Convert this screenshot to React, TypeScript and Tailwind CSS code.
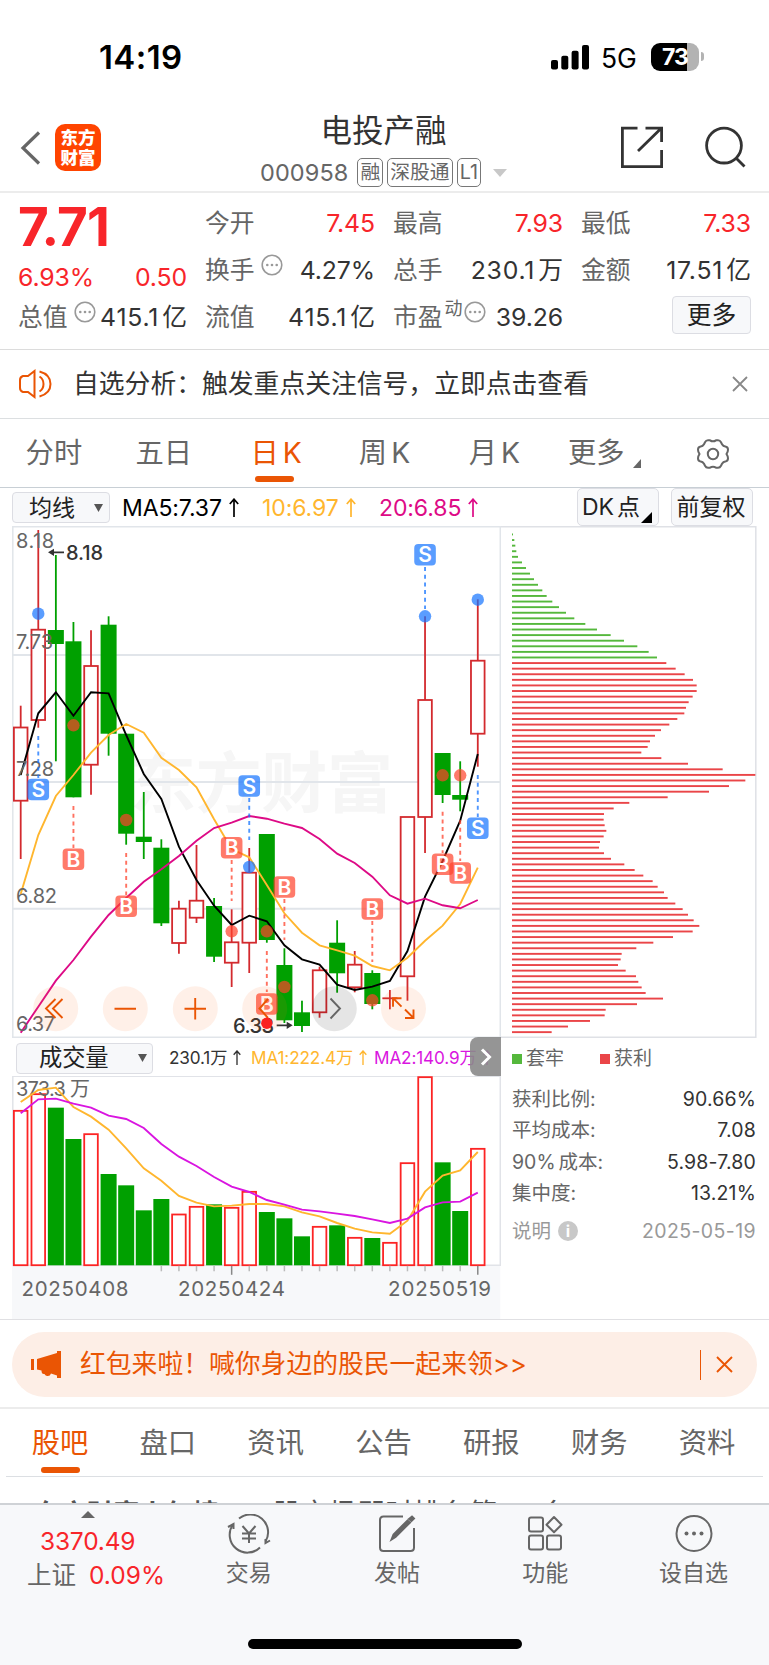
import type { ReactNode } from "react";

const STEP = 17.58;
const cx = (i: number) => 20.7 + STEP * i;

type Candle = [up: 0 | 1, high: number, top: number, bottom: number, low: number];

const candles: Candle[] = [
  [1, 705.7, 727.5, 800.7, 859],
  [1, 530, 629.7, 720, 727.7],
  [0, 555, 630, 644, 761.3],
  [0, 622, 641.3, 797.3, 797.3],
  [1, 630.3, 666, 764.7, 794.7],
  [0, 616.3, 624.7, 733.7, 755.7],
  [0, 733.7, 733.7, 833.7, 844.7],
  [0, 792, 836.7, 842, 859],
  [0, 839.3, 847.7, 923.3, 926],
  [1, 900.7, 908.7, 943, 953.7],
  [1, 845, 900.7, 917.7, 923],
  [0, 898, 906, 956.7, 962],
  [1, 909.3, 942.3, 962.7, 987],
  [1, 848, 872.7, 942.7, 973],
  [0, 834, 834, 940, 942.7],
  [0, 948.3, 965, 1020.3, 1023],
  [0, 1000.7, 1012.3, 1026, 1032],
  [1, 966.7, 970.3, 1012.3, 1017.7],
  [0, 920.3, 942.7, 973.3, 992.7],
  [1, 951, 964.7, 987.3, 992.3],
  [0, 970.3, 973, 1004, 1009.3],
  [1, 990, 998.3, 998.3, 1009.3],
  [1, 817, 817, 976.3, 1000.7],
  [1, 616.3, 700, 817, 853],
  [0, 753, 753, 795, 803],
  [0, 761.3, 795, 799.7, 811.3],
  [1, 599.3, 660.7, 733.7, 766.7],
];

const ma5 = [775, 713.3, 692.3, 715.7, 692.3, 693.3, 735, 774, 799, 846.7, 880, 905.7, 925, 915.7, 921.3, 945.3, 959.3, 964.7, 984.7, 990, 986.7, 981, 951, 896.7, 861, 820.7, 754];
const ma10 = [894, 835, 796, 775, 752.7, 735, 724, 732.7, 757.7, 770, 787.3, 819.3, 849, 857.3, 885, 913.3, 932.7, 945.3, 950.3, 955.7, 966, 970.3, 957.7, 940.7, 925.7, 904, 867.7];
const ma20 = [1032.7, 1006.7, 980.7, 960, 936.7, 915, 898, 881.7, 869.3, 856, 840.7, 828, 822.7, 816, 818.7, 823.7, 828, 839, 853.7, 863, 876.7, 895.3, 903.7, 898.7, 905.3, 908.3, 900];

// offsets from the top of the volume pane, in thirds of a pixel
const volTops = [241, 191, 233, 327, 311, 432, 466, 541, 507, 552, 529, 523, 532, 484, 546, 565, 619, 589, 586, 622, 624, 637, 398, 140, 397, 543, 355];
const volMa1 = [216, 180, 173, 231, 260, 299, 355, 415, 452, 498, 518, 529, 527, 522, 522, 529, 547, 559, 579, 596, 607, 611, 572, 485, 437, 421, 366];
const volMa2 = [250, 208, 206, 221, 233, 257, 267, 294, 342, 380, 408, 441, 470, 486, 510, 524, 539, 544, 551, 558, 568, 579, 566, 532, 517, 515, 488];
const vy = (v: number) => 1030 + v / 3;

const chips = [
  39, 43, 46, 49, 54, 66, 78, 90, 102, 114, 127, 140, 157, 177, 198, 223, 256, 291, 332, 372, 412, 446, 471,
  499, 527, 554, 579, 590, 590, 578, 566, 558, 553, 532, 508, 483, 465, 450, 443, 424, 484, 564, 668,
  766, 736, 687, 627, 503, 388, 341, 312, 311, 314, 319, 311, 300, 297, 312, 333, 373, 404, 430, 458,
  473, 492, 503, 526, 548, 564, 581, 598, 578, 519, 460, 409, 365, 362, 354, 377, 408, 415, 425, 437,
  489, 411, 317, 314, 270, 204, 155,
];

type Signal = { k: "B" | "S"; i: number; box: number; from: number; to: number; dot: number };

const signals: Signal[] = [
  { k: "S", i: 1, box: 789.5, from: 736, to: 778, dot: 613.7 },
  { k: "B", i: 3, box: 859.3, from: 806, to: 848, dot: 725.3 },
  { k: "B", i: 6, box: 906.3, from: 853, to: 895, dot: 820 },
  { k: "B", i: 12, box: 847.7, from: 860, to: 901, dot: 931.3 },
  { k: "S", i: 13, box: 786, from: 798, to: 840, dot: 867 },
  { k: "B", i: 14, box: 1004, from: 951, to: 992, dot: 931.3 },
  { k: "B", i: 15, box: 887, from: 899, to: 940, dot: 987 },
  { k: "B", i: 20, box: 909, from: 921, to: 962, dot: 1000.3 },
  { k: "S", i: 23, box: 554.7, from: 567, to: 609, dot: 616.3 },
  { k: "B", i: 24, box: 864.3, from: 811.7, to: 853, dot: 775.3 },
  { k: "B", i: 25, box: 873, from: 820, to: 861, dot: 775.3 },
  { k: "S", i: 26, box: 828.3, from: 775, to: 817, dot: 599.7 },
];

const points = (ys: number[]) => ys.map((y, i) => `${cx(i)},${y}`).join(" ");

function StatusBar() {
  return (
    <div className="flex h-[96px] items-start pt-[37px]">
      <div className="ml-[99px] w-[452px] text-[33px] leading-[41px] font-semibold tracking-[0.4px] text-black">14:19</div>
      <svg className="mt-[8px] h-[25px] w-[38px]" viewBox="0 0 38 25">
        <rect x="0" y="15" width="7" height="9.5" rx="2" />
        <rect x="10.3" y="10.7" width="7" height="13.8" rx="2" />
        <rect x="20.6" y="5.7" width="7" height="18.8" rx="2" />
        <rect x="31" y="0" width="7" height="24.5" rx="2" />
      </svg>
      <div className="ml-[12px] w-[50px] text-[26.5px] leading-[43px] tracking-[0px] text-black">5G</div>
      <div className="mt-[6px] flex h-[28px] w-[48px] items-center justify-center overflow-hidden rounded-[9px] bg-[linear-gradient(90deg,#000_75%,#b3b3b3_75%)] text-[23px] font-bold tracking-[-1px] text-white">
        73
      </div>
      <div className="mt-[15px] ml-[2px] h-[9px] w-[3px] rounded-r-full bg-[#b3b3b3]" />
    </div>
  );
}

function Badge({ children }: { children: ReactNode }) {
  return (
    <span className="flex h-[29px] items-center rounded-[5px] border border-[#777] px-[2px] text-[19.8px] leading-none">
      {children}
    </span>
  );
}

function Header() {
  return (
    <header className="flex h-[97px] border-b-2 border-[#ececec]">
      <div className="flex w-[200px] pl-[20px]">
        <svg className="mt-[35px] h-[34px] w-[22px]" viewBox="0 0 22 34" fill="none" stroke="#666" strokeWidth="3.2">
          <path d="M19 1.5 3 17l16 15.5" />
        </svg>
        <div className="mt-[28px] ml-[13px] flex h-[47px] w-[46px] flex-col items-center justify-center rounded-[10px] bg-[#ff4400] text-[17.5px] leading-[19.5px] font-black text-white">
          <span>东方</span>
          <span>财富</span>
        </div>
      </div>
      <div className="flex w-[367px] flex-col items-center">
        <h1 className="mt-[16px] text-[31.5px] leading-[38px] text-[#333]">电投产融</h1>
        <div className="mt-[8px] flex items-center text-[#666]">
          <span className="mr-[9px] text-[23.5px] leading-[29px] tracking-[0.1px]">000958</span>
          <div className="flex gap-[4px]">
            <Badge>融</Badge>
            <Badge>深股通</Badge>
            <Badge>L1</Badge>
          </div>
          <svg className="ml-[12px] h-[8px] w-[14px]" viewBox="0 0 14 8">
            <path d="M0 0h14L7 8z" fill="#c8c8c8" />
          </svg>
        </div>
      </div>
      <div className="flex pl-[53px] pt-[30px]">
        <svg className="h-[44px] w-[44px]" viewBox="0 0 44 44" fill="none" stroke="#333" strokeWidth="2.8">
          <path d="M17.5 2.2H2.4v38.4h39.2V24M18 25 41 2.4M25.5 2.2h16.1V16" />
        </svg>
        <svg className="ml-[40px] h-[44px] w-[44px]" viewBox="0 0 44 44" fill="none" stroke="#333" strokeWidth="2.8">
          <circle cx="20" cy="19.6" r="17.4" />
          <path d="m32 32 8.5 8.5" />
        </svg>
      </div>
    </header>
  );
}

function Dots() {
  return (
    <svg className="h-[22px] w-[22px] -translate-y-[5px]" viewBox="0 0 22 22" fill="#999">
      <circle cx="11" cy="11" r="9.8" fill="none" stroke="#999" strokeWidth="1.6" />
      <circle cx="6.3" cy="11" r="1.3" />
      <circle cx="11" cy="11" r="1.3" />
      <circle cx="15.7" cy="11" r="1.3" />
    </svg>
  );
}

function Figure({ value, unit }: { value: string; unit?: string }) {
  return (
    <span className={unit ? "flex tracking-[0.8px]" : "flex"}>
      {value}
      {unit && <span className="ml-[3px] tracking-normal">{unit}</span>}
    </span>
  );
}

function Stat({ label, value, unit, red, extra }: { label: string; value: string; unit?: string; red?: boolean; extra?: ReactNode }) {
  return (
    <div className="flex h-[47px] items-center">
      <span className="text-[#666]">{label}</span>
      {extra}
      <span className={red ? "ml-auto text-[#f8252a]" : "ml-auto text-[#333]"}>
        <Figure value={value} unit={unit} />
      </span>
    </div>
  );
}

function Quote() {
  return (
    <section className="flex h-[157px] border-b border-[#dcdcdc] pl-[18px] text-[24.8px] leading-[30px] tracking-[-0.1px]">
      <div className="w-[169px]">
        <div className="pt-[4px] text-[53px] leading-[60px] font-bold tracking-[-0.8px] text-[#f8252a]">7.71</div>
        <div className="mt-[5px] flex justify-between text-[#f8252a]">
          <span>6.93%</span>
          <span>0.50</span>
        </div>
        <div className="mt-[10px] flex items-center">
          <span className="text-[#666]">总值</span>
          <span className="ml-[7px]"><Dots /></span>
          <span className="ml-auto text-[#333]"><Figure value="415.1" unit="亿" /></span>
        </div>
      </div>
      <div className="ml-[18px] w-[170px] pt-[6px]">
        <Stat label="今开" value="7.45" red />
        <Stat label="换手" value="4.27%" extra={<span className="ml-[7px]"><Dots /></span>} />
        <Stat label="流值" value="415.1" unit="亿" />
      </div>
      <div className="ml-[18px] w-[170px] pt-[6px]">
        <Stat label="最高" value="7.93" red />
        <Stat label="总手" value="230.1" unit="万" />
        <Stat
          label="市盈"
          value="39.26"
          extra={
            <>
              <span className="ml-[2px] -translate-y-[8px] text-[18px] text-[#666]">动</span>
              <span className="ml-[2px]"><Dots /></span>
            </>
          }
        />
      </div>
      <div className="ml-[18px] w-[170px] pt-[6px]">
        <Stat label="最低" value="7.33" red />
        <Stat label="金额" value="17.51" unit="亿" />
        <div className="mt-[3px] ml-auto flex h-[38px] w-[79px] items-center justify-center rounded-[4px] border border-[#dcdde3] bg-[#f7f8fa] text-[#222]">
          更多
        </div>
      </div>
    </section>
  );
}

function Notice() {
  return (
    <section className="flex h-[69px] items-center border-b border-[#dcdfe1] pl-[19px] text-[#333]">
      <svg className="h-[30px] w-[34px]" viewBox="0 0 34 30" fill="none" stroke="#ea5504" strokeWidth="2">
        <path d="M15.5 2v26L9 23H4q-3-1-3-4v-8q0-3 3-4h5zM20.500 7.500q4 2.500 4 7.500t-4 7.500M20.500 2.500q11 3 11 12.500t-11 12.500" />
      </svg>
      <span className="ml-[20px] text-[25.800px]">自选分析：触发重点关注信号，立即点击查看</span>
      <svg className="ml-auto mr-[21px] h-[16px] w-[16px]" viewBox="0 0 16 16" stroke="#888" strokeWidth="1.8">
        <path d="m1 1 14 14M15 1 1 15" />
      </svg>
    </section>
  );
}

function KTab({ name }: { name: string }) {
  return (
    <span className="flex justify-center gap-[4px]">
      <span>{name}</span>
      <span>K</span>
    </span>
  );
}

function PeriodTabs() {
  return (
    <nav className="grid h-[69px] grid-cols-7 border-b border-[#c8cfd5] text-center text-[28.3px] leading-[69px] text-[#666]">
      <span className="-ml-[2px]">分时</span>
      <span className="-ml-[2px]">五日</span>
      <span className="flex flex-col items-center pl-[3px] text-[#ea5504]">
        <span className="h-[57px]"><KTab name="日" /></span>
        <span className="mr-[3px] h-[6px] w-[39px] rounded-[3px] bg-[#ea5504]" />
      </span>
      <KTab name="周" />
      <KTab name="月" />
      <span className="flex items-center justify-center gap-[8px]">
        更多
        <svg className="mt-[20px] h-[9px] w-[8px]" viewBox="0 0 8 9">
          <path d="M8 0v9H0z" fill="#666" />
        </svg>
      </span>
      <span className="-ml-[2px] flex items-center justify-center">
        <svg className="h-[32px] w-[34px]" viewBox="0 0 34 32" fill="none" stroke="#666" strokeWidth="2">
          <path d="M12 2.300h2q3 2 6 0h2q2 0 3 2l1 2q1 2 4 2.500 2 .5 2 3 0 2-1.500 4.200 1.500 2.200 1.500 4.200 0 2.500-2 3-3 .5-4 2.500l-1 2q-1 2-3 2h-2q-3-2-6 0h-2q-2 0-3-2l-1-2q-1-2-4-2.500-2-.5-2-3 0-2 1.500-4.200Q2 13.800 2 11.800q0-2.500 2-3 3-.5 4-2.500l1-2q1-2 3-2z" />
          <circle cx="17" cy="16" r="5.200" />
        </svg>
      </span>
    </nav>
  );
}

function Caret() {
  return (
    <svg className="h-[8px] w-[9px]" viewBox="0 0 9 8">
      <path d="M0 0h9L4.500 8z" fill="#555" />
    </svg>
  );
}

function UpArrow({ className }: { className: string }) {
  return (
    <svg className={className} viewBox="0 0 10 19" fill="none" stroke="currentColor" strokeWidth="1.700">
      <path d="M5 19V1M.8 6 5 1.200 9.200 6" />
    </svg>
  );
}

function MaBar() {
  return (
    <div className="flex h-[38px] pl-[12px] text-[23px] leading-[38px]">
      <div className="mt-[4px] flex h-[31px] w-[98px] items-center justify-between rounded-[4px] border border-[#dcdde3] bg-[#f7f8fa] pl-[16px] pr-[6px] text-[#222]">
        均线
        <Caret />
      </div>
      <div className="ml-[12px] flex pt-[1px] whitespace-nowrap">
        <span className="flex w-[140px] items-center tracking-[-0.100px] text-black">
          MA5:7.37
          <UpArrow className="ml-[7px] h-[19px] w-[10px]" />
        </span>
        <span className="flex w-[117px] items-center tracking-[-0.100px] text-[#ffb62e]">
          10:6.97
          <UpArrow className="ml-[7px] h-[19px] w-[10px]" />
        </span>
        <span className="flex w-[198px] items-center tracking-[-0.100px] text-[#dd0a86]">
          20:6.85
          <UpArrow className="ml-[7px] h-[19px] w-[10px]" />
        </span>
      </div>
      <div className="flex h-[38px] w-[82px] items-center rounded-[5px] border border-[#dcdde3] bg-[#f7f8fa] pl-[4px] text-[#222]">
        <span>DK</span>
        <span className="ml-[3px]">点</span>
        <svg className="mt-[20px] ml-[1px] h-[11px] w-[11px] shrink-0" viewBox="0 0 11 11">
          <path d="M11 0v11H0z" />
        </svg>
      </div>
      <div className="ml-[12px] flex h-[38px] w-[82px] items-center justify-center rounded-[5px] border border-[#dcdde3] bg-[#f7f8fa] pr-[2px] text-[#222]">
        前复权
      </div>
    </div>
  );
}

function PriceChart() {
  return (
    <svg className="block h-[512px] w-[489px]" viewBox="12 526 489 512" fontSize="20">
      <text x="130" y="806.500" fontSize="66" fontWeight="700" fill="#f6f6f6" textLength="263">东方财富</text>
      <g stroke="#e1e5ea" strokeWidth="2">
        <path d="M12 655H500M12 782H500M12 908.700H500" />
        <path d="M12.800 1038V526.800H500.300V1038M12 1037.300H501" fill="none" strokeWidth="1.500" />
      </g>

      {candles.map(([up, high, top, bottom, low], i) => {
        const x = cx(i);
        return up ? (
          <g key={i} stroke="#d32a2e" strokeWidth="1.800" fill="#fff">
            <path d={`M${x} ${high}V${low}`} />
            {bottom > top ? (
              <rect x={x - 6.800} y={top} width="13.600" height={bottom - top} />
            ) : (
              <path d={`M${x - 7.500} ${top}h15`} />
            )}
          </g>
        ) : (
          <g key={i} fill="#00a000">
            <rect x={x - 0.900} y={high} width="1.800" height={low - high} />
            <rect x={x - 8} y={top} width="16" height={bottom - top} />
          </g>
        );
      })}

      <g fill="none" strokeWidth="1.900">
        <polyline points={points(ma5)} stroke="#000" />
        <polyline points={points(ma10)} stroke="#ffb62e" />
        <polyline points={points(ma20)} stroke="#dd0a86" />
      </g>

      <g fill="#666">
        <text x="16" y="548" textLength="38">8.18</text>
        <text x="16" y="648.500" textLength="37">7.73</text>
        <text x="16" y="776" textLength="38">7.28</text>
        <text x="16" y="902.500" textLength="41">6.82</text>
        <text x="16" y="1030.500" textLength="39">6.37</text>
      </g>
      <g fill="#333" fontWeight="500">
        <text x="66" y="560" textLength="37">8.18</text>
        <text x="233" y="1033" textLength="41">6.33</text>
        <path d="M48 552.300l6-3.500v2.700h10v1.700h-10v2.700zM292.700 1025.300l-6-3.500v2.700h-10v1.700h10v2.700z" />
      </g>

      {signals.map((s) => {
        const x = cx(s.i);
        const color = s.k === "B" ? "#ff422b" : "#1473ff";
        return (
          <g key={s.i}>
            <path d={`M${x} ${s.from}V${s.to}`} stroke={color} strokeOpacity=".75" strokeWidth="1.900" strokeDasharray="4 3.700" />
            <circle cx={x} cy={s.dot} r="6.200" fill={color} fillOpacity=".7" />
            <rect x={x - 10.800} y={s.box - 10.800} width="21.600" height="21.600" rx="4" fill={color} fillOpacity=".7" />
            <text x={x} y={s.box + 7.500} fontSize="21" fontWeight="600" fill="#fff" textAnchor="middle">{s.k}</text>
          </g>
        );
      })}

      <g fill="#ff6a1f" fillOpacity=".1">
        <circle cx="55.700" cy="1008.700" r="22.500" />
        <circle cx="125.300" cy="1008.700" r="22.500" />
        <circle cx="195.300" cy="1008.700" r="22.500" />
        <circle cx="264.700" cy="1008.700" r="22.500" />
        <circle cx="334.300" cy="1008.700" r="22.500" fill="#000" />
        <circle cx="403.500" cy="1008.700" r="22.500" />
      </g>
      <g fill="none" stroke="#ea5504" strokeWidth="1.900">
        <path d="M55.500 999 46 1008.500l9.500 9.500M62.500 999 53 1008.500l9.500 9.500" />
        <path d="M114.500 1008.700h21.500M184.500 1008.700h21.500M195.200 998v21.500" />
        <path d="M268 999l-8.500 9.500 8.500 9.500" />
        <path d="M401.500 998.200h-8.500v8.500M393 998.200l8.500 8.500M413.500 1009.500v8.500h-8.500M413.500 1018l-8.500-8.500" />
        <path d="M330.500 998.500l9.500 10-9.500 10" stroke="#666" />
      </g>
      <circle cx={cx(14)} cy="1023.300" r="5.700" fill="#fa2020" />
    </svg>
  );
}

function VolumeBar() {
  return (
    <div className="relative flex h-[38px] w-[489px] items-center text-[17.200px] tracking-[-0.150px] whitespace-nowrap">
      <div className="mt-[2px] ml-[4px] flex h-[31px] w-[137px] items-center justify-between rounded-[4px] border border-[#dcdde3] bg-[#f7f8fa] pl-[22px] pr-[5px] text-[23.300px] text-[#222]">
        成交量
        <Caret />
      </div>
      <span className="mt-[2px] ml-[16px] flex w-[82px] items-center text-[#333]">
        230.1万
        <UpArrow className="ml-[6px] h-[15px] w-[8px]" />
      </span>
      <span className="mt-[2px] flex w-[123px] items-center text-[#ffb62e]">
        MA1:222.4万
        <UpArrow className="ml-[6px] h-[15px] w-[8px]" />
      </span>
      <span className="mt-[2px] flex items-center text-[#d915e0]">
        MA2:140.9万
        <UpArrow className="ml-[6px] h-[15px] w-[8px]" />
      </span>
      <div className="absolute -top-px right-0 flex h-[39px] w-[31px] items-center justify-center rounded-l-[8px] bg-[#8a8a8a]/90">
        <svg className="h-[18px] w-[12px]" viewBox="0 0 12 18" fill="none" stroke="#fff" strokeWidth="3">
          <path d="m2 1.500 7.500 7.500L2 16.500" />
        </svg>
      </div>
    </div>
  );
}

function VolumeChart() {
  return (
    <svg className="block h-[243px] w-[489px]" viewBox="12 1076 489 243" fontSize="20.500">
      <rect x="12" y="1265.500" width="488.300" height="54" fill="#f7f8fa" />
      <path d="M12.800 1265.300V1076.200H500.300V1265.300z" fill="#fff" stroke="#e1e3e8" strokeWidth="1.500" />
      {volTops.map((t, i) =>
        candles[i][0] ? (
          <rect key={i} x={cx(i) - 6.800} y={vy(t) + 0.500} width="13.600" height={1264.700 - vy(t)} fill="#fff" stroke="#fc2424" strokeWidth="1.800" />
        ) : (
          <rect key={i} x={cx(i) - 8} y={vy(t)} width="16" height={1265.300 - vy(t)} fill="#00a000" />
        ),
      )}
      <text x="16" y="1095.500" fontSize="20" fill="#666" textLength="74">373.3 万</text>
      <g fill="none" strokeWidth="1.900">
        <polyline points={points(volMa1.map(vy))} stroke="#ffb62e" />
        <polyline points={points(volMa2.map(vy))} stroke="#d915e0" />
      </g>
      {volTops.map((_, i) =>
        i < 8 ? null : (
          <path key={i} d={`M${cx(i)} 1265.800v${i === 12 || i === 26 ? 9 : 5.500}`} stroke={i === 12 || i === 26 ? "#888" : "#bbb"} strokeWidth="1.500" />
        ),
      )}
      <g fill="#666">
        <text x="21.500" y="1296" textLength="107">20250408</text>
        <text x="178" y="1296" textLength="107">20250424</text>
        <text x="388" y="1296" textLength="103">20250519</text>
      </g>
    </svg>
  );
}

function ChipChart() {
  return (
    <svg className="block h-[512px] w-[256px]" viewBox="501 526 256 512">
      <path d="M501 526.800H755.800V1037.300H501" fill="none" stroke="#dfe1e6" strokeWidth="1.500" />
      {chips.map((end, i) => (
        <rect key={i} x="512" y={533.500 + i * 5.592} width={(end - 36) / 3} height="1.900" fill={i < 23 ? "#55b83c" : "#ea4548"} />
      ))}
    </svg>
  );
}

const chipStats: [ReactNode, string][] = [
  ["获利比例:", "90.66%"],
  ["平均成本:", "7.08"],
  [<>90%<span className="ml-[3px]">成本:</span></>, "5.98-7.80"],
  ["集中度:", "13.21%"],
];

function ChipInfo() {
  return (
    <div className="flex flex-col pr-[1px] pl-[11px] text-[19.500px] text-[#666]">
      <div className="mt-[1px] flex h-[40px] items-center text-[19px]">
        <i className="mr-[4px] h-[10px] w-[10px] bg-[#55b83c]" />
        套牢
        <i className="mr-[4px] ml-[36px] h-[10px] w-[10px] bg-[#ea4548]" />
        获利
      </div>
      <div className="mt-[5px]">
        {chipStats.map(([label, value]) => (
          <div key={value} className="flex h-[31.300px] items-center justify-between">
            <span>{label}</span>
            <span className="tracking-[0.150px] text-[#333]">{value}</span>
          </div>
        ))}
      </div>
      <div className="mt-[7px] flex h-[30px] items-center text-[#999]">
        说明
        <span className="ml-[7px] flex h-[20px] w-[20px] items-center justify-center rounded-full bg-[#c8c8c8] text-[16px] font-bold text-white">i</span>
        <span className="ml-auto tracking-[0.400px]">2025-05-19</span>
      </div>
    </div>
  );
}

function Promo() {
  return (
    <section className="h-[89px] border-b-2 border-[#ececec] px-[12px] pt-[12px]">
      <div className="flex h-[65px] items-center rounded-full bg-[#fdeee6] pl-[19px] text-[#ea5504]">
        <svg className="h-[27px] w-[31px]" viewBox="0 0 31 27" fill="#ea5504">
          <path d="M0 8h3v11H0zM6 8l20-6V0h4v27h-4v-2.500l-6-2q-1 3-4 2.500-2-.5-2.500-2-3 .5-3-3.500L6 18.500z" />
        </svg>
        <span className="ml-[18px] text-[25.800px]">红包来啦！喊你身边的股民一起来领&gt;&gt;</span>
        <span className="ml-auto h-[30px] w-[1.500px] bg-[#ea5504]" />
        <svg className="mr-[24px] ml-[15px] h-[17px] w-[17px]" viewBox="0 0 17 17" stroke="#ea5504" strokeWidth="1.900">
          <path d="m1 1 15 15M16 1 1 16" />
        </svg>
      </div>
    </section>
  );
}

const sections = ["股吧", "盘口", "资讯", "公告", "研报", "财务", "资料"];

function SectionTabs() {
  return (
    <nav className="mx-[6px] flex h-[68px] justify-center border-b border-[#dcdfe3] pr-[2px] text-[28.300px] leading-[69px] text-[#666]">
      {sections.map((s, i) => (
        <span key={s} className={i === 0 ? "flex w-[108.200px] flex-col items-center text-[#ea5504]" : "w-[108.200px] text-center"}>
          <span className="h-[58px]">{s}</span>
          {i === 0 && <span className="ml-[2px] h-[6px] w-[39px] rounded-[3px] bg-[#ea5504]" />}
        </span>
      ))}
    </nav>
  );
}

function Peek() {
  return (
    <div className="h-[26px] overflow-hidden pt-[20px] pl-[34px]">
      <div className="flex text-[28px] leading-[34px] whitespace-nowrap text-[#555]">
        <span className="-mt-px w-[239px] text-[26.400px] font-bold">东方财富人气榜</span>
        <span className="w-[395px]">股市场即时排名第 10 名</span>
        <span className="text-[22px] leading-[28px] text-[#ea5504]">&gt;&gt;&gt;&gt;</span>
      </div>
    </div>
  );
}

function Action({ label, children }: { label: string; children: ReactNode }) {
  return (
    <div className="flex w-[148.300px] flex-col items-center pt-[9px] pr-[1px]">
      <svg className="h-[40px] w-[44px]" viewBox="0 0 44 40" fill="none" stroke="#666" strokeWidth="2">
        {children}
      </svg>
      <span className="mt-[4px] text-[23px] leading-[30px]">{label}</span>
    </div>
  );
}

function BottomBar() {
  return (
    <footer className="flex h-[162px] flex-col border-t-2 border-[#cfd2d6] bg-[#f7f8fa] text-[#666]">
      <div className="flex h-[134px]">
        <div className="w-[175px] text-[24.500px] leading-[30px]">
          <svg className="mt-[6px] ml-[81px] h-[7px] w-[14px]" viewBox="0 0 14 7">
            <path d="M7 0l7 7H0z" fill="#666" />
          </svg>
          <div className="mt-[8px] ml-[40px] tracking-[-0.200px] text-[#f8252a]">3370.49</div>
          <div className="mt-[4px] ml-[27px] flex">
            上证<span className="ml-[13px] text-[#f8252a]">0.09%</span>
          </div>
        </div>
        <Action label="交易">
          <path d="M12 4.500A17.800 17.800 0 0 1 38.500 27.500M33 33.500A17.800 17.800 0 0 1 6 10.500" />
          <path d="m43 26.500-4.500 2.500v-4M1 13l5.500-3v5" />
          <path d="m15.500 12 6.500 7.500 6.500-7.500M22 19.500V29M15 19.500h14M15 24.500h14" strokeWidth="2" />
        </Action>
        <Action label="发帖">
          <path d="M28 2.500H8.500q-3.500 0-3.500 3.500v27.500q0 3.500 3.500 3.500h27q3.500 0 3.500-3.500V14" />
          <path d="m16.500 25.500 2-5L32.500 6.500l2.500 2L20.500 23zM34 5l3-2.500 2 2-2.500 2.500z" fill="#666" />
        </Action>
        <Action label="功能">
          <rect x="6" y="3.500" width="14" height="14" rx="2" />
          <rect x="6" y="21.500" width="14" height="14" rx="2" />
          <rect x="24" y="21.500" width="14" height="14" rx="2" />
          <path d="M31 3 38.500 10.700 31 18.300 23.500 10.700z" strokeLinejoin="round" />
        </Action>
        <Action label="设自选">
          <circle cx="22" cy="19.500" r="17.500" />
          <g fill="#666" stroke="none">
            <circle cx="14.500" cy="19.500" r="2" />
            <circle cx="22" cy="19.500" r="2" />
            <circle cx="29.500" cy="19.500" r="2" />
          </g>
        </Action>
      </div>
      <div className="mx-auto h-[10px] w-[274px] rounded-full bg-black" />
    </footer>
  );
}

export default function App() {
  return (
    <div className="h-[1665px] w-[769px] overflow-hidden bg-white font-['Inter','Noto_Sans_CJK_SC',sans-serif]">
      <StatusBar />
      <Header />
      <Quote />
      <Notice />
      <PeriodTabs />
      <MaBar />
      <main className="flex h-[794px] border-b border-[#e0e0e3] pl-[12px]">
        <div className="w-[489px]">
          <PriceChart />
          <VolumeBar />
          <VolumeChart />
        </div>
        <div className="w-[256px]">
          <ChipChart />
          <ChipInfo />
        </div>
      </main>
      <Promo />
      <SectionTabs />
      <Peek />
      <BottomBar />
    </div>
  );
}
